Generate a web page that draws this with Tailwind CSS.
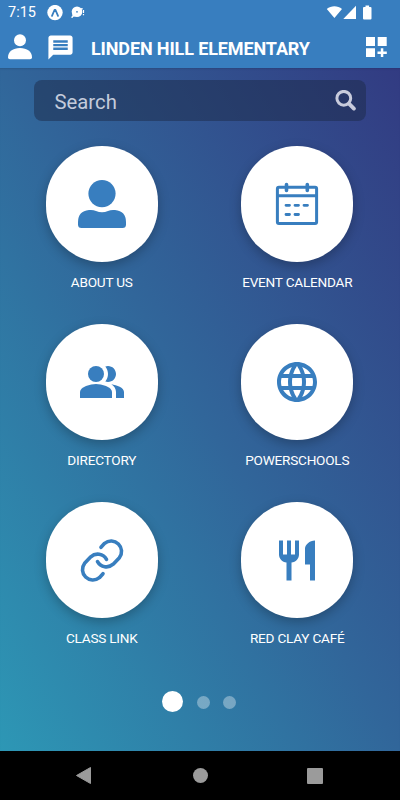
<!DOCTYPE html>
<html lang="en">
<head>
<meta charset="utf-8"/>
<meta content="width=device-width, initial-scale=1.0" name="viewport"/>
<title>Linden Hill Elementary</title>
<script src="https://cdn.jsdelivr.net/npm/@tailwindcss/browser@4"></script>
</head>
<body class="w-[400px] h-[800px] overflow-hidden flex flex-col bg-black font-['Roboto',sans-serif] text-white">
<header class="h-[68px] shrink-0 bg-[#387ebf]">
<!-- status bar -->
<div class="h-[26px] flex items-center pl-2 pr-[28px]">
<span class="w-[39px] text-[14.5px] leading-none pt-px">7:15</span>
<svg class="w-4 h-4" viewBox="0 0 16 16"><circle cx="8" cy="7.600" r="7.700" fill="#fff"/><path d="M5 10.800 7.500 5h1L11 10.800" fill="none" stroke="#387ebf" stroke-width="1.800" stroke-linecap="round" stroke-linejoin="round"/></svg>
<svg class="w-4 h-4 ml-[7px]" viewBox="0 0 16 16"><circle cx="7" cy="6.800" r="5.300" fill="#fff"/><path d="M2.500 8.500 5 11.500 3.300 11.800 2.500 13 .8 12.300 2.300 11zM10.500 3.200 12.800 3 12 5.500z" fill="#fff"/><circle cx="7" cy="6.800" r=".9" fill="#387ebf"/><path d="M13.500 5v3M13.500 9v1.200" stroke="#fff" stroke-width="1.200"/></svg>
<svg class="w-[46px] h-4 ml-auto" viewBox="0 0 46 16"><g fill="#fff"><path d="M.8 4C5 .2 11.800.2 16 4L8.400 13z"/><path d="M30 .8V14H17.300z"/><path d="M39.500.6h3.600v1.400H44.500q1 0 1 1v10.400q0 1-1 1h-6.500q-1 0-1-1V3q0-1 1-1H39.500z"/></g></svg>
</div>
<!-- app bar -->
<div class="h-[42px] flex items-center pl-2 pr-[13px]">
<svg class="w-6 h-[26px]" viewBox="0 0 24 26"><g fill="#fff"><circle cx="12" cy="6.200" r="6"/><path d="M0 23.500C0 17.500 5 14 12 14S24 17.500 24 23.500Q24 25.300 22 25.300H2Q0 25.300 0 23.500z"/></g></svg>
<svg class="w-[29px] h-[29px] ml-[13.500px]" viewBox="0 0 24 24"><path fill="#fff" d="M20 2H4c-1.100 0-1.990.9-1.990 2L2 22l4-4h14c1.100 0 2-.9 2-2V4c0-1.100-.9-2-2-2zm-2 12H6v-2h12v2zm0-3H6V9h12v2zm0-3H6V6h12v2z"/></svg>
<h1 class="ml-[16.500px] pt-1 text-[18px] font-bold leading-none tracking-[-0.12px] whitespace-nowrap">LINDEN HILL ELEMENTARY</h1>
<svg class="w-[21px] h-5 ml-auto" viewBox="0 0 21 20"><path fill="#fff" d="M0 0h9v9H0zM11.700 0h9v9h-9zM0 11.300h9v9H0zM14.800 11.300h2.500v3.200h3.500v2.500h-3.500v3.300h-2.500V17h-3.300v-2.500h3.300z"/></svg>
</div>
</header>
<main class="h-[683px] shrink-0 bg-[linear-gradient(to_top_right,#2d97b5,#31669a_50%,#323b82)] flex flex-col items-center pt-3 shadow-[inset_0_2px_2px_-1px_#00000020]">
<div class="w-[332px] h-[41px] shrink-0 rounded-[8px] bg-[#1b2947]/50 flex items-center justify-between pl-[20.500px] pr-[10px]">
<span class="text-[20.300px] leading-none pt-[3px] text-[#c3cbdb]">Search</span>
<svg class="w-[21px] h-[21px]" viewBox="0 0 21 21"><g fill="none" stroke="#c8cbdc" stroke-linecap="round"><circle cx="8.800" cy="8.300" r="6.900" stroke-width="3"/><path d="m14.200 13.800 4.700 4.800" stroke-width="3.800"/></g></svg>
</div>
<div class="grid grid-cols-2 w-[391px] mt-[25px] mr-px text-center text-[13.600px] tracking-[-0.220px] leading-4 gap-y-[34px]">
<div class="flex flex-col items-center h-36">
<div class="w-28 h-[116px] shrink-0 rounded-full bg-white shadow-[0_4px_12px_#00000040] flex items-center justify-center">
<svg class="w-12 h-12" viewBox="0 0 48 48"><g fill="#387ebf"><circle cx="24" cy="13.600" r="13.600"/><path d="M11 30Q15 29.500 18 31Q24 33.500 30 31Q33 29.500 37 30Q48 31 48 42V44.500Q48 48 44.500 48H3.500Q0 48 0 44.500V42Q0 31 11 30z"/></g></svg>
</div>
<span class="mt-3">ABOUT US</span>
</div>
<div class="flex flex-col items-center h-36">
<div class="w-28 h-[116px] shrink-0 rounded-full bg-white shadow-[0_4px_12px_#00000040] flex items-center justify-center">
<svg class="w-12 h-12" viewBox="0 0 48 48"><g fill="none" stroke="#387ebf" stroke-width="3" stroke-linecap="round"><rect x="4.400" y="7.200" width="39.200" height="36.400" rx="1.500"/><path d="M5 15.700h38"/><path d="M13.500 4.500v6M34.300 4.500v6" stroke-width="3.600"/><path d="M13 25.300h3.500M22 25.300h3.500M31 25.300h3.500M13 34.500h3.500M22 34.500h3.500" stroke-width="2.800"/></g></svg>
</div>
<span class="mt-3">EVENT CALENDAR</span>
</div>
<div class="flex flex-col items-center h-36">
<div class="w-28 h-[116px] shrink-0 rounded-full bg-white shadow-[0_4px_12px_#00000040] flex items-center justify-center">
<svg class="w-12 h-12" viewBox="0 0 24 24"><g fill="#387ebf"><path d="M16.670 13.130C18.040 14.060 19 15.320 19 17v3h4v-3c0-2.180-3.570-3.470-6.330-3.870z"/><path d="M15 12c2.210 0 4-1.790 4-4s-1.790-4-4-4c-.47 0-.91.1-1.330.24C14.500 5.270 15 6.580 15 8s-.5 2.730-1.330 3.760c.42.14.86.24 1.330.24z"/><circle cx="9" cy="8" r="4"/><path d="M9 13c-2.670 0-8 1.340-8 4v3h16v-3c0-2.660-5.330-4-8-4z"/></g></svg>
</div>
<span class="mt-3">DIRECTORY</span>
</div>
<div class="flex flex-col items-center h-36">
<div class="w-28 h-[116px] shrink-0 rounded-full bg-white shadow-[0_4px_12px_#00000040] flex items-center justify-center">
<svg class="w-12 h-12" viewBox="0 0 24 24"><path fill="#387ebf" d="M11.990 2C6.470 2 2 6.480 2 12s4.470 10 9.990 10C17.520 22 22 17.520 22 12S17.520 2 11.990 2zm6.930 6h-2.950c-.32-1.250-.78-2.450-1.380-3.560 1.840.63 3.370 1.910 4.330 3.560zM12 4.040c.83 1.200 1.480 2.530 1.910 3.960h-3.820c.43-1.430 1.080-2.760 1.910-3.960zM4.260 14C4.100 13.360 4 12.690 4 12s.1-1.360.26-2h3.380c-.08.66-.14 1.320-.14 2s.06 1.340.14 2H4.260zm.82 2h2.950c.32 1.250.78 2.450 1.380 3.560-1.840-.63-3.370-1.900-4.330-3.560zm2.950-8H5.080c.96-1.660 2.490-2.930 4.330-3.560C8.810 5.550 8.350 6.750 8.030 8zM12 19.960c-.83-1.200-1.480-2.530-1.910-3.960h3.820c-.43 1.430-1.080 2.760-1.910 3.960zM14.340 14H9.660c-.09-.66-.16-1.320-.16-2s.07-1.350.16-2h4.680c.09.65.16 1.320.16 2s-.07 1.340-.16 2zm.25 5.560c.6-1.110 1.060-2.310 1.380-3.560h2.950c-.96 1.650-2.490 2.930-4.330 3.560zM16.360 14c.08-.66.14-1.320.14-2s-.06-1.340-.14-2h3.380c.16.64.26 1.310.26 2s-.1 1.360-.26 2h-3.380z"/></svg>
</div>
<span class="mt-3">POWERSCHOOLS</span>
</div>
<div class="flex flex-col items-center h-36">
<div class="w-28 h-[116px] shrink-0 rounded-full bg-white shadow-[0_4px_12px_#00000040] flex items-center justify-center">
<svg class="w-12 h-12" viewBox="0 0 48 48"><g fill="none" stroke="#387ebf" stroke-width="3.600" stroke-linecap="round" stroke-linejoin="round"><path id="half" d="M23 11.300 26.600 7.300A10.400 10.400 0 0 1 41.400 21.700L35.200 28.200A10.200 10.200 0 0 1 19.500 25.600"/><use href="#half" transform="rotate(180 24 24.500)"/></g></svg>
</div>
<span class="mt-3">CLASS LINK</span>
</div>
<div class="flex flex-col items-center h-36">
<div class="w-28 h-[116px] shrink-0 rounded-full bg-white shadow-[0_4px_12px_#00000040] flex items-center justify-center">
<svg class="w-12 h-12" viewBox="0 0 24 24"><path fill="#387ebf" d="M11 9H9V2H7v7H5V2H3v7c0 2.120 1.660 3.840 3.750 3.970V22h2.500v-9.030C11.340 12.840 13 11.120 13 9V2h-2v7zm5-3v8h2.500v8H21V2c-2.760 0-5 2.240-5 4z" transform="translate(0 .3)"/></svg>
</div>
<span class="mt-3">RED CLAY CAFÉ</span>
</div>
</div>
<!-- page dots -->
<div class="flex items-center self-start ml-[162px] mt-[45px]">
<i class="w-[21px] h-[21px] rounded-full bg-white"></i>
<i class="w-[13px] h-[13px] rounded-full bg-white/35 ml-[13.500px] mt-[2px]"></i>
<i class="w-[13px] h-[13px] rounded-full bg-white/35 ml-[13.500px] mt-[2px]"></i>
</div>
</main>
<nav class="h-[49px] shrink-0 bg-black flex items-center justify-between pl-[76px] pr-[77px]">
<svg class="w-[15px] h-[17px]" viewBox="0 0 15 17"><path d="M.5 8.500 14.500.5v16z" fill="#9b9b9b" stroke="#9b9b9b" stroke-linejoin="round"/></svg>
<i class="w-[15px] h-[15px] rounded-full bg-[#9b9b9b] ml-[2px]"></i>
<i class="w-4 h-4 rounded-[1px] bg-[#9b9b9b]"></i>
</nav>
</body>
</html>
